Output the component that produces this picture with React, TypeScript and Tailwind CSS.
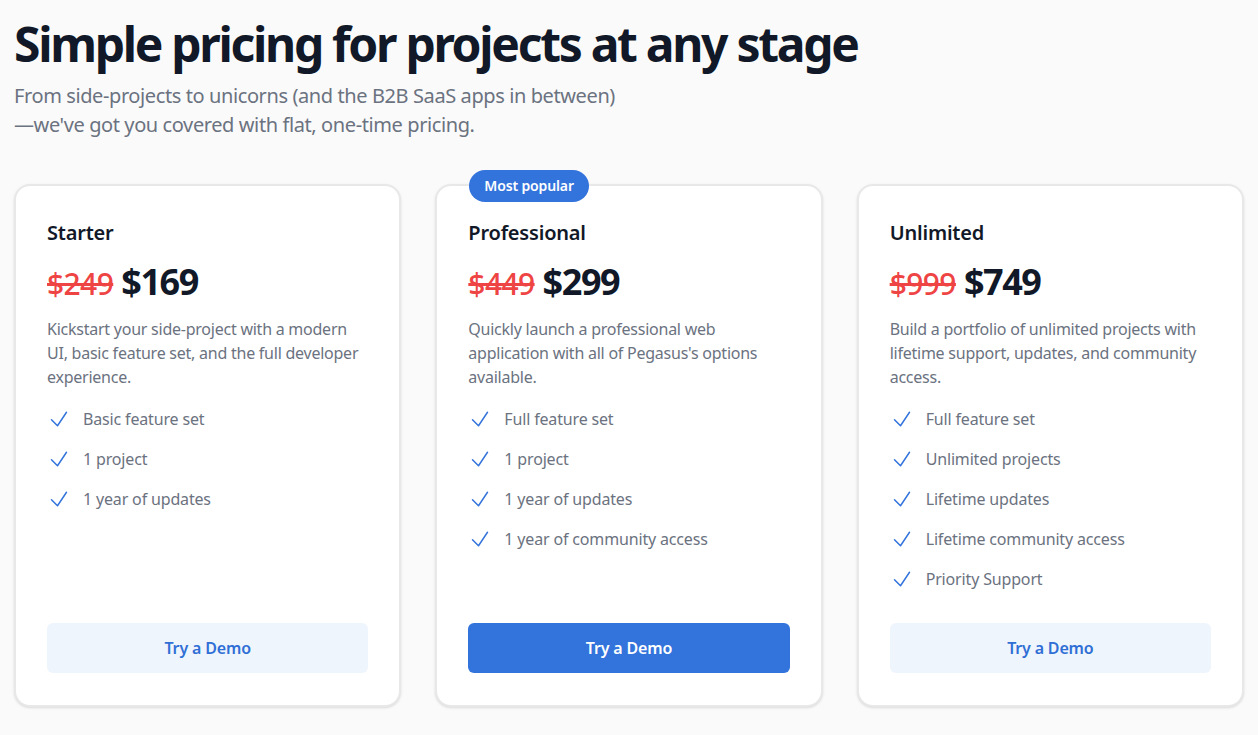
import React from "react";

type Plan = {
  name: string;
  oldPrice: string;
  price: string;
  description: string;
  features: string[];
  featured?: boolean;
};

const plans: Plan[] = [
  {
    name: "Starter",
    oldPrice: "$249",
    price: "$169",
    description: "Kickstart your side-project with a modern\nUI, basic feature set, and the full developer experience.",
    features: ["Basic feature set", "1 project", "1 year of updates"],
  },
  {
    name: "Professional",
    oldPrice: "$449",
    price: "$299",
    description: "Quickly launch a professional web application with all of Pegasus's options available.",
    features: ["Full feature set", "1 project", "1 year of updates", "1 year of community access"],
    featured: true,
  },
  {
    name: "Unlimited",
    oldPrice: "$999",
    price: "$749",
    description: "Build a portfolio of unlimited projects with lifetime support, updates, and community access.",
    features: ["Full feature set", "Unlimited projects", "Lifetime updates", "Lifetime community access", "Priority Support"],
  },
];

function CheckIcon() {
  return (
    <svg viewBox="0 0 24 24" fill="none" strokeWidth={1.5} stroke="currentColor" className="h-6 w-6 shrink-0 text-[#3273dc]">
      <path strokeLinecap="round" strokeLinejoin="round" d="M4.5 12.75l6 6 9-13.5" />
    </svg>
  );
}

function PlanCard({ plan }: { plan: Plan }) {
  return (
    <div className="relative flex flex-col rounded-2xl border-2 border-[#e8e8e8] bg-white px-[31px] pb-[32px] pt-[33px] shadow-sm">
      {plan.featured && (
        <div className="absolute -top-[16px] left-[32px] rounded-full bg-[#3273dc] px-[15px] py-[6px] text-sm font-semibold leading-5 tracking-[-0.01em] text-white">
          Most popular
        </div>
      )}
      <h3 className="text-xl font-semibold leading-7 tracking-[-0.01em] text-[#111827]">{plan.name}</h3>
      <div className="mt-[15px] flex items-baseline gap-2">
        <span className="text-3xl font-medium tracking-[-0.02em] text-[#ef4444] line-through">{plan.oldPrice}</span>
        <span className="text-4xl font-bold tracking-[-0.04em] text-[#111827]">{plan.price}</span>
      </div>
      <p className="mt-[15px] whitespace-pre-line text-base leading-6 tracking-[-0.015em] text-[#6b7280]">{plan.description}</p>
      <ul className="mt-[18px] flex flex-col gap-4">
        {plan.features.map((f) => (
          <li key={f} className="flex items-center gap-3 text-base leading-6 tracking-[-0.01em] text-[#6b7280]">
            <CheckIcon />
            {f}
          </li>
        ))}
      </ul>
      <div className="flex-1" />
      <button
        className={
          plan.featured
            ? "mt-8 h-[50px] w-full rounded-md bg-[#3273dc] text-base font-semibold tracking-[-0.01em] text-white"
            : "mt-8 h-[50px] w-full rounded-md bg-[#eff5fc] text-base font-semibold tracking-[-0.01em] text-[#2f6fd6]"
        }
      >
        Try a Demo
      </button>
    </div>
  );
}

export default function App() {
  return (
    <div className="min-h-screen bg-[#fafafa] px-[14px] pt-[14px] pb-[28px] font-['Noto_Sans',sans-serif]">
      <h1 className="text-5xl font-bold leading-[60px] tracking-[-0.048em] text-[#111827]">Simple pricing for projects at any stage</h1>
      <p className="mt-[7px] text-xl leading-[29px] tracking-[-0.02em] text-[#6b7280]">
        From side-projects to unicorns (and the B2B SaaS apps in between)
        <br />
        —we've got you covered with flat, one-time pricing.
      </p>
      <div className="mt-[45px] grid grid-cols-3 gap-[34px]">
        {plans.map((p) => (
          <PlanCard key={p.name} plan={p} />
        ))}
      </div>
    </div>
  );
}
